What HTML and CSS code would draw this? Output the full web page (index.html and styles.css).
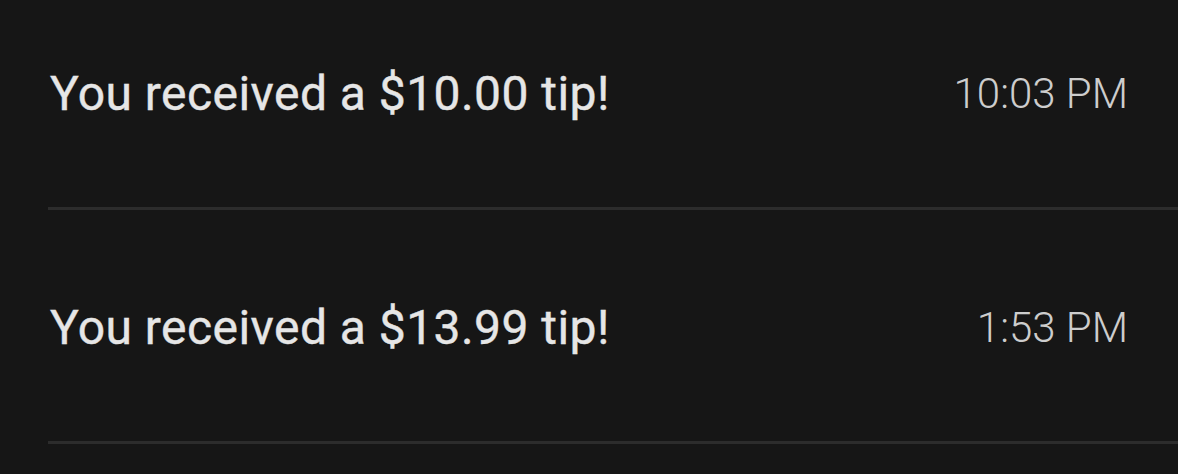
FILE: index.html
```html
<!DOCTYPE html>
<html lang="en">
<head>
	<meta charset="UTF-8">
	<title>Tips</title>
	<link rel="stylesheet" href="styles.css">
</head>
<body>
	<section class="wrap">
		<ul class="list">
			<li class="item">
				<span class="msg">You received a $10.00 tip!</span>
				<span class="time">10:03 PM</span>
			</li>
			<li class="item">
				<span class="msg">You received a $13.99 tip!</span>
				<span class="time">1:53 PM</span>
			</li>
		</ul>
	</section>
</body>
</html>
```
FILE: styles.css
```css
html,body{
	margin: 0;
	background: #161616;
}
.wrap{
	height: 474px;
	overflow: hidden;
	padding-left: 48px;
	font-family: Roboto, "Noto Sans", sans-serif;
}
.list{
	list-style: none;
	margin: -24px 0 0;
	padding: 0;
}
.item{
	height: 228px;
	display: flex;
	align-items: center;
	justify-content: space-between;
	padding: 3px 50px 0 2px;
	box-sizing: content-box;
	border-bottom: 3px solid #2c2c2c;
}
.msg{
	font-size: 48px;
	font-weight: 400;
	letter-spacing: 0.45px;
	-webkit-text-stroke: 0.4px #e6e6e6;
	color: #e6e6e6;
}
.time{
	font-size: 42px;
	font-weight: 300;
	color: #cdcdcd;
}
```
